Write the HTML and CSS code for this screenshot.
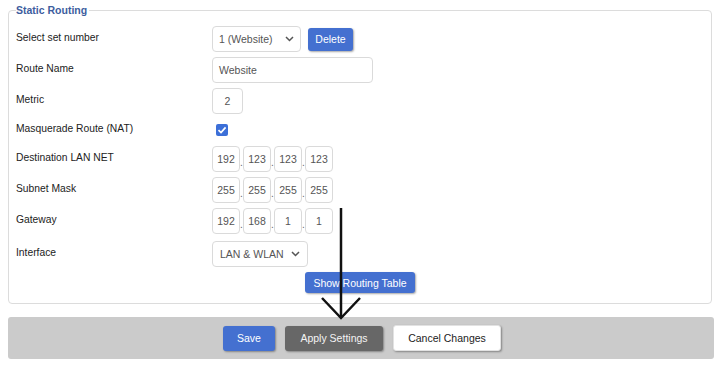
FILE: index.html
```html
<!DOCTYPE html>
<html>
<head>
<meta charset="utf-8">
<link rel="stylesheet" href="styles.css">
</head>
<body>
<div class="page">
  <fieldset class="box">
    <legend class="legend">Static Routing</legend>
    <div class="form">
      <div class="row">
        <span class="label">Select set number</span>
        <div class="ctrl">
          <div class="select sel-set"><span>1 (Website)</span><svg class="chev" width="9" height="6" viewBox="0 0 9 6"><path d="M1 1 L4.5 4.5 L8 1" fill="none" stroke="#555" stroke-width="1.5"/></svg></div>
          <button class="btn blue btn-del">Delete</button>
        </div>
      </div>
      <div class="row">
        <span class="label">Route Name</span>
        <div class="ctrl"><div class="input name">Website</div></div>
      </div>
      <div class="row">
        <span class="label">Metric</span>
        <div class="ctrl"><div class="input metric">2</div></div>
      </div>
      <div class="row short">
        <span class="label">Masquerade Route (NAT)</span>
        <div class="ctrl"><span class="check"><svg width="12" height="12" viewBox="0 0 12 12"><path d="M2.5 6.2 L5 8.6 L9.6 3.4" fill="none" stroke="#fff" stroke-width="1.7"/></svg></span></div>
      </div>
      <div class="row">
        <span class="label">Destination LAN NET</span>
        <div class="ctrl ip"><div class="input oct">192</div><span class="dot">.</span><div class="input oct">123</div><span class="dot">.</span><div class="input oct">123</div><span class="dot">.</span><div class="input oct">123</div></div>
      </div>
      <div class="row">
        <span class="label">Subnet Mask</span>
        <div class="ctrl ip"><div class="input oct">255</div><span class="dot">.</span><div class="input oct">255</div><span class="dot">.</span><div class="input oct">255</div><span class="dot">.</span><div class="input oct">255</div></div>
      </div>
      <div class="row">
        <span class="label">Gateway</span>
        <div class="ctrl ip"><div class="input oct">192</div><span class="dot">.</span><div class="input oct">168</div><span class="dot">.</span><div class="input oct">1</div><span class="dot">.</span><div class="input oct">1</div></div>
      </div>
      <div class="row last">
        <span class="label">Interface</span>
        <div class="ctrl">
          <div class="select sel-if"><span>LAN &amp; WLAN</span><svg class="chev" width="9" height="6" viewBox="0 0 9 6"><path d="M1 1 L4.5 4.5 L8 1" fill="none" stroke="#555" stroke-width="1.5"/></svg></div>
        </div>
      </div>
    </div>
    <div class="center">
      <button class="btn blue btn-table">Show Routing Table</button>
    </div>
  </fieldset>
  <div class="bar">
    <button class="btn blue btn-save">Save</button>
    <button class="btn dark btn-apply">Apply Settings</button>
    <button class="btn white btn-cancel">Cancel Changes</button>
  </div>
</div>
<svg class="arrow" width="720" height="371" viewBox="0 0 720 371">
  <path d="M341 208 L341 318" stroke="#111" stroke-width="2.5" fill="none"/>
  <path d="M322 298 L341 318 L360 298" stroke="#111" stroke-width="2.5" fill="none"/>
</svg>
</body>
</html>
```
FILE: styles.css
```css
html, body {
  margin: 0;
  padding: 0;
  background: #fff;
}
body {
  font-family: "Liberation Sans", Arial, sans-serif;
  font-size: 10.3px;
  color: #222;
  width: 720px;
  height: 371px;
  overflow: hidden;
  position: relative;
}
.page {
  padding: 3px 8px 0 8px;
}
.box {
  margin: 0;
  width: 704px;
  box-sizing: border-box;
  border: 1px solid #dcdcdc;
  border-radius: 4px;
  padding: 9px 7px 10px 7px;
}
.legend {
  font-weight: bold;
  color: #3d5d9e;
  font-size: 10.5px;
  padding: 0 2px 0 0;
  margin-left: 0;
  line-height: 14px;
}
.form {
  display: flex;
  flex-direction: column;
  gap: 5px;
}
.row {
  display: grid;
  grid-template-columns: 196px 1fr;
  align-items: center;
  height: 26px;
}
.row.short {
  height: 22px;
}
.row.last {
  margin-top: 2px;
}
.label {
  margin-top: -3px;
}
.ctrl {
  display: flex;
  align-items: center;
  gap: 7px;
}
.ctrl.ip {
  gap: 0;
}
.input, .select {
  box-sizing: border-box;
  height: 26px;
  border: 1px solid #dadada;
  border-radius: 4px;
  background: #fff;
  color: #555;
  display: flex;
  align-items: center;
  padding: 0 6px;
  font-size: 10.5px;
}
.sel-set {
  width: 89px;
  justify-content: space-between;
}
.sel-if {
  width: 96px;
  justify-content: space-between;
  padding: 0 7px;
}
.chev {
  display: block;
}
.name {
  width: 161px;
}
.metric {
  width: 31px;
  justify-content: center;
}
.oct {
  width: 28px;
  padding: 0;
  justify-content: center;
}
.dot {
  width: 3px;
  text-align: center;
  color: #666;
  font-size: 10px;
  margin-top: 6px;
}
.check {
  display: block;
  width: 12px;
  height: 12px;
  margin-left: 4px;
  background: #3c6fd8;
  border-radius: 2px;
}
.check svg {
  display: block;
}
.btn {
  font-family: "Liberation Sans", Arial, sans-serif;
  font-size: 10.5px;
  border: none;
  border-radius: 3px;
  padding: 0;
  margin: 0;
  box-shadow: 1px 1px 2px rgba(0, 0, 0, 0.35);
}
.blue {
  background: #4470d0;
  color: #fff;
}
.dark {
  background: #676767;
  color: #f4f4f4;
}
.white {
  background: #fff;
  color: #222;
  border: 1px solid #e2e2e2;
}
.btn-del {
  width: 45px;
  height: 23px;
}
.center {
  display: flex;
  justify-content: center;
  margin-top: 5px;
}
.btn-table {
  width: 110px;
  height: 21px;
}
.bar {
  margin-top: 13px;
  width: 706px;
  height: 42px;
  box-sizing: border-box;
  background: #cbcbcb;
  border-radius: 3px;
  display: flex;
  justify-content: center;
  align-items: center;
  gap: 10px;
  padding-left: 2px;
}
.btn-save {
  width: 52px;
  height: 25px;
}
.btn-apply {
  width: 98px;
  height: 25px;
}
.btn-cancel {
  width: 108px;
  height: 26px;
}
.arrow {
  position: absolute;
  left: 0;
  top: 0;
  pointer-events: none;
}
```
